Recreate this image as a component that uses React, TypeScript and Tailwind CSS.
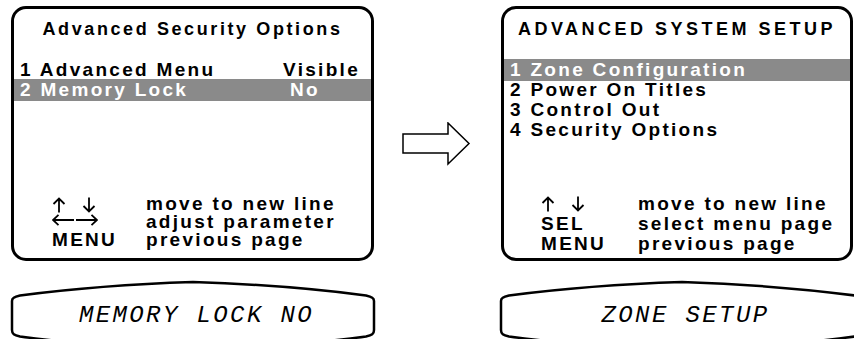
import React from 'react';

type Row = { label: string; value?: string; valueClass?: string; selected?: boolean };

// thin stroke key glyphs drawn as small icons
function UpDown() {
    return (
        <span className="flex items-start gap-[16px] h-full pt-[2px]">
            <svg width="14" height="16" viewBox="0 0 14 16" fill="none" stroke="black" strokeWidth="1.8">
                <path d="M7,15.5 L7,1.5 M1.5,7 L7,1.5 L12.5,7" />
            </svg>
            <svg width="14" height="16" viewBox="0 0 14 16" fill="none" stroke="black" strokeWidth="1.8">
                <path d="M7,0.5 L7,14.5 M1.5,9 L7,14.5 L12.5,9" />
            </svg>
        </span>
    );
}

function LeftRight() {
    return (
        <span className="flex items-start h-full pt-[1px]">
            <svg width="46" height="12" viewBox="0 0 46 12" fill="none" stroke="black" strokeWidth="1.8">
                <path d="M1,6 L22,6 M6.5,0.8 L1,6 L6.5,11.2 M24,6 L45,6 M39.5,0.8 L45,6 L39.5,11.2" />
            </svg>
        </span>
    );
}

function KeyCell({ k }: { k: string }) {
    if (k === 'updown') return <UpDown />;
    if (k === 'leftright') return <LeftRight />;
    return <span className="whitespace-pre">{k}</span>;
}

function MenuPanel({ title, titleClass, rows, keys, hints, footerClass }: {
    title: string;
    titleClass: string;
    rows: Row[];
    keys: string[];
    hints: string[];
    footerClass: string;
}) {
    return (
        <div className="w-full h-[255px] shrink-0 border-[3px] border-black rounded-[15px] flex flex-col pt-[10px]">
            <div className={`font-bold text-center text-[18px] leading-[20px] ${titleClass}`}>{title}</div>

            {/* menu rows */}
            <div className="mt-[21px] flex flex-col">
                {rows.map((r) => (
                    <div
                        key={r.label}
                        className={`flex items-center text-[19px] leading-[20px] font-bold tracking-[2.3px] px-[6px] ${r.selected ? 'h-[22px] -my-[1px] bg-[#8a8a8a] text-white' : 'h-[20px]'}`}
                    >
                        <span className="flex-1 whitespace-pre">{r.label}</span>
                        {r.value && <span className={`w-[82px] ${r.valueClass ?? ''}`}>{r.value}</span>}
                    </div>
                ))}
            </div>

            {/* key help */}
            <div className={`mt-auto grid text-[19px] font-bold tracking-[2.3px] ${footerClass}`}>
                {keys.map((k, i) => (
                    <React.Fragment key={i}>
                        <KeyCell k={k} />
                        <span className="whitespace-pre">{hints[i]}</span>
                    </React.Fragment>
                ))}
            </div>
        </div>
    );
}

function LcdWindow({ text }: { text: string }) {
    return (
        <div className="relative w-[366px] h-[72px] mt-[19px] shrink-0">
            <svg width="366" height="72" viewBox="0 0 366 72" className="absolute inset-0 overflow-visible">
                <path
                    d="M2,21 C2,18 4,17 10,15.5 Q90,5 183,2 Q276,5 356,15.5 C362,17 364,18 364,21 L364,50 C364,54 362,55 356,56.5 Q276,67 183,70 Q90,67 10,56.5 C4,55 2,54 2,50 Z"
                    fill="white"
                    stroke="black"
                    strokeWidth="2.5"
                />
            </svg>
            <div className="relative h-full flex items-center justify-center pl-[7px] font-['Liberation_Mono',monospace] italic text-[24px] tracking-[2.4px] whitespace-pre">
                {text}
            </div>
        </div>
    );
}

export default function App() {
    return (
        <div className="w-[854px] h-[339px] overflow-hidden bg-white flex text-black font-['Liberation_Sans',Arial,sans-serif]">
            {/* left screen */}
            <div className="ml-[11px] w-[363px] shrink-0 pt-[6px] flex flex-col">
                <MenuPanel
                    title="Advanced Security Options"
                    titleClass="tracking-[2.6px]"
                    rows={[
                        { label: '1 Advanced Menu', value: 'Visible' },
                        { label: '2 Memory Lock', value: 'No', valueClass: 'pl-[7px]', selected: true },
                    ]}
                    keys={['updown', 'leftright', 'MENU']}
                    hints={['move to new line', 'adjust parameter', 'previous page']}
                    footerClass="grid-cols-[94px_1fr] pl-[38px] leading-[18px] pb-[9px]"
                />
                <div className="-ml-[1px]">
                    <LcdWindow text="MEMORY LOCK NO" />
                </div>
            </div>

            {/* arrow between screens */}
            <div className="w-[127px] shrink-0 pt-[122px] pl-[28px]">
                <svg width="70" height="44" viewBox="0 0 70 44">
                    <path d="M1,12 L46,12 L46,1 L67,21.5 L46,42 L46,31 L1,31 Z" fill="white" stroke="black" strokeWidth="1.5" strokeLinejoin="miter" />
                </svg>
            </div>

            {/* right screen */}
            <div className="w-[352px] shrink-0 pt-[6px] flex flex-col">
                <MenuPanel
                    title="ADVANCED SYSTEM SETUP"
                    titleClass="tracking-[3.5px]"
                    rows={[
                        { label: '1 Zone Configuration', selected: true },
                        { label: '2 Power On Titles' },
                        { label: '3 Control Out' },
                        { label: '4 Security Options' },
                    ]}
                    keys={['updown', 'SEL', 'MENU']}
                    hints={['move to new line', 'select menu page', 'previous page']}
                    footerClass="grid-cols-[97px_1fr] pl-[37px] leading-[20px] pb-[4px]"
                />
                <div className="-ml-[2px]">
                    <LcdWindow text="ZONE SETUP" />
                </div>
            </div>
        </div>
    );
}
